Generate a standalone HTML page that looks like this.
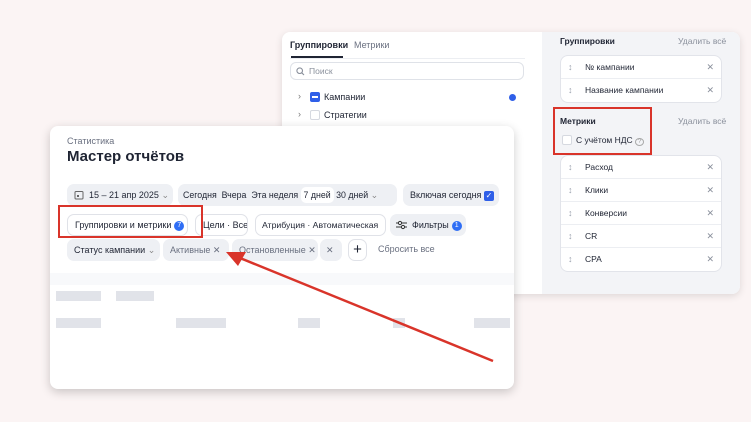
<!DOCTYPE html>
<html><head><meta charset="utf-8"><style>
*{box-sizing:border-box;margin:0;padding:0}
body{width:751px;height:422px;overflow:hidden;background:#fbf4f4;font-family:"Liberation Sans",sans-serif;color:#1f2433;position:relative}
.abs{position:absolute}
.back{left:282px;top:32px;width:458px;height:262px;background:#fff;border-radius:8px;box-shadow:0 2px 8px rgba(0,0,0,.12);overflow:hidden}
.right{left:260px;top:0;width:198px;height:262px;background:#f3f4f7}
.t{font-size:9px;white-space:nowrap}
.list{background:#fff;border:1px solid #e2e4ea;border-radius:8px;left:18px;width:162px}
.row{height:23px;border-bottom:1px solid #eceef2;position:relative;font-size:8.5px;line-height:23px;padding-left:24px}
.row:last-child{border-bottom:none}
.row:before{content:"↕";position:absolute;left:7px;color:#9aa0ad;font-size:9px}
.row:after{content:"✕";position:absolute;right:7px;color:#8a909c;font-size:9px}
.card{left:50px;top:126px;width:464px;height:263px;background:#fff;border-radius:8px;box-shadow:0 3px 10px rgba(0,0,0,.2)}
.chip{position:absolute;height:22px;border-radius:7px;background:#eef0f4;font-size:9px;line-height:22px;padding:0 7px;white-space:nowrap;overflow:hidden}
.wchip{background:#fff;border:1px solid #e0e2e8;line-height:20px}
.badge{display:inline-block;width:10px;height:10px;border-radius:50%;background:#2f6ef5;color:#fff;font-size:7px;line-height:10px;text-align:center;vertical-align:middle;margin-left:3px}
.red{position:absolute;border:2.5px solid #d9342a}
.blur{position:absolute;background:#d4d7e0;opacity:.7}
</style></head><body>
<div class="abs back">
 <div class="abs t" style="left:8px;top:8px;font-weight:bold">Группировки</div>
 <div class="abs t" style="left:72px;top:8px;color:#6a7080">Метрики</div>
 <div class="abs" style="left:9px;top:24px;width:52px;height:2px;background:#1f2433"></div>
 <div class="abs" style="left:8px;top:26px;width:235px;height:1px;background:#eceef2"></div>
 <div class="abs" style="left:8px;top:30px;width:234px;height:18px;border:1px solid #dfe2e8;border-radius:6px;font-size:8.5px;color:#8a909c;line-height:16px;padding-left:18px">Поиск
  <svg style="position:absolute;left:5px;top:4px" width="9" height="9" viewBox="0 0 9 9"><circle cx="3.7" cy="3.7" r="2.8" fill="none" stroke="#8a909c" stroke-width="1.1"/><path d="M5.8 5.8L8 8" stroke="#8a909c" stroke-width="1.1"/></svg></div>
 <div class="abs t" style="left:16px;top:59px;color:#777">›</div>
 <div class="abs" style="left:28px;top:60px;width:10px;height:10px;border-radius:2px;background:#2f5fe8"><div style="margin:4px 2px;height:2px;background:#fff"></div></div>
 <div class="abs t" style="left:42px;top:60px">Кампании</div>
 <div class="abs" style="left:227px;top:62px;width:7px;height:7px;border-radius:50%;background:#2f5fe8"></div>
 <div class="abs t" style="left:16px;top:77px;color:#777">›</div>
 <div class="abs" style="left:28px;top:78px;width:10px;height:10px;border-radius:2px;border:1px solid #d6d9e0"></div>
 <div class="abs t" style="left:42px;top:78px">Стратегии</div>
 <div class="abs right">
  <div class="abs t" style="left:18px;top:4px;font-weight:bold;font-size:8.5px">Группировки</div>
  <div class="abs t" style="left:136px;top:4px;color:#8a909c;font-size:8.5px">Удалить всё</div>
  <div class="abs list" style="top:23px"><div class="row">№ кампании</div><div class="row">Название кампании</div></div>
  <div class="abs t" style="left:18px;top:84px;font-weight:bold;font-size:8.5px">Метрики</div>
  <div class="abs t" style="left:136px;top:84px;color:#8a909c;font-size:8.5px">Удалить всё</div>
  <div class="abs" style="left:20px;top:103px;width:10px;height:10px;border:1px solid #d6d9e0;border-radius:2px;background:#fff"></div>
  <div class="abs t" style="left:34px;top:103px;font-size:8.5px">С учётом НДС <span style="color:#999;border:1px solid #aaa;border-radius:50%;font-size:6px;padding:0 2px">?</span></div>
  <div class="abs list" style="top:123px"><div class="row">Расход</div><div class="row">Клики</div><div class="row">Конверсии</div><div class="row">CR</div><div class="row">CPA</div></div>
 </div>
</div>
<div class="red" style="left:553px;top:107px;width:99px;height:48px"></div>

<div class="abs card">
 <div class="abs t" style="left:17px;top:10px;color:#6a7080;font-size:9px">Статистика</div>
 <div class="abs" style="left:17px;top:22px;font-size:15px;font-weight:bold;white-space:nowrap">Мастер отчётов</div>
 <div class="chip" style="left:17px;top:58px;width:106px;padding-left:22px">15 – 21 апр 2025 <span style="color:#888">⌄</span>
  <svg style="position:absolute;left:7px;top:6px" width="10" height="10" viewBox="0 0 10 10"><rect x="1" y="1.5" width="8" height="7.5" rx="1" fill="none" stroke="#666" stroke-width="1"/><rect x="3" y="5" width="2" height="2" fill="#666"/></svg></div>
 <div class="chip" style="left:128px;top:58px;width:219px;padding:0 5px;font-size:8.8px">Сегодня&nbsp;&nbsp;Вчера&nbsp;&nbsp;Эта неделя <span style="background:#fff;border-radius:5px;padding:3px 3px">7 дней</span> 30 дней <span style="color:#888">⌄</span></div>
 <div class="chip" style="left:353px;top:58px;width:96px">Включая сегодня <span style="display:inline-block;width:10px;height:10px;border-radius:2px;background:#2f5fe8;color:#fff;font-size:8px;line-height:10px;text-align:center;vertical-align:middle">✓</span></div>
 <div class="chip wchip" style="left:17px;top:88px;width:121px">Группировки и метрики<span class="badge">7</span></div>
 <div class="chip wchip" style="left:145px;top:88px;width:53px">Цели · Все</div>
 <div class="chip wchip" style="left:205px;top:88px;width:131px;padding:0 6px;font-size:8.7px">Атрибуция · Автоматическая</div>
 <div class="chip" style="left:340px;top:88px;width:76px;padding-left:22px">Фильтры<span class="badge">1</span>
  <svg style="position:absolute;left:6px;top:6px" width="11" height="10" viewBox="0 0 11 10"><path d="M0 3h11M0 7h11" stroke="#333" stroke-width="1.1"/><circle cx="4" cy="3" r="1.6" fill="#eef0f4" stroke="#333"/><circle cx="7" cy="7" r="1.6" fill="#eef0f4" stroke="#333"/></svg></div>
 <div class="chip" style="left:17px;top:113px;width:93px">Статус кампании <span style="color:#888">⌄</span></div>
 <div class="chip" style="left:113px;top:113px;width:66px;color:#6a7080">Активные <span>✕</span></div>
 <div class="chip" style="left:182px;top:113px;width:86px;color:#6a7080">Остановленные <span>✕</span></div>
 <div class="chip" style="left:270px;top:113px;width:22px;color:#6a7080;padding:0 6px">✕</div>
 <div class="chip wchip" style="left:298px;top:113px;width:19px;padding:0;text-align:center;font-size:15px">+</div>
 <div class="abs t" style="left:328px;top:118px;color:#6a7080;font-size:9px">Сбросить все</div>
 <div class="abs" style="left:0;top:147px;width:464px;height:12px;background:#f8f9fb"></div>
 <div class="blur" style="left:6px;top:165px;width:45px;height:10px"></div>
 <div class="blur" style="left:66px;top:165px;width:38px;height:10px"></div>
 <div class="blur" style="left:6px;top:192px;width:45px;height:10px"></div>
 <div class="blur" style="left:126px;top:192px;width:50px;height:10px"></div>
 <div class="blur" style="left:248px;top:192px;width:22px;height:10px"></div>
 <div class="blur" style="left:343px;top:192px;width:12px;height:10px"></div>
 <div class="blur" style="left:424px;top:192px;width:36px;height:10px"></div>
</div>
<div class="red" style="left:58px;top:205px;width:145px;height:33px"></div>
<svg class="abs" style="left:0;top:0" width="751" height="422"><line x1="493" y1="361" x2="240" y2="258" stroke="#d9342a" stroke-width="2.5"/><path d="M226 252 L246 252 L238 266 Z" fill="#d9342a"/></svg>
</body></html>
